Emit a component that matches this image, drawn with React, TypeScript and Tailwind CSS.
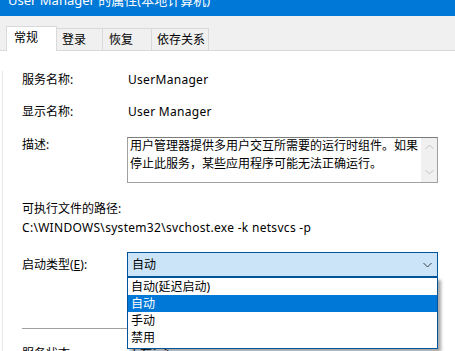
import React from "react";

const font = { fontFamily: '"Noto Sans", "Noto Sans CJK SC", sans-serif' };

export default function App() {
  return (
    <div
      className="relative w-[455px] h-[351px] overflow-hidden bg-white text-[12px] text-black"
      style={font}
    >
      {/* title bar */}
      <div className="h-[16px] bg-[#0078d7] overflow-hidden">
        <div className="pl-[8px] -mt-[9px] text-[13px] leading-[18px] text-white whitespace-nowrap">
          User Manager 的属性(本地计算机)
        </div>
      </div>

      {/* tab strip */}
      <div className="h-[35px] bg-[#f0f0f0] border-b border-[#d9d9d9] flex items-end pl-[6px]">
        <div className="w-[51px] h-[25px] -mb-[1px] bg-white border border-b-0 border-[#d9d9d9] pl-[7px] leading-[22px]">
          常规
        </div>
        <div className="w-[46px] h-[22px] border-t border-r border-[#d9d9d9] pl-[5px] leading-[22px]">
          登录
        </div>
        <div className="w-[49px] h-[22px] border-t border-r border-[#d9d9d9] pl-[6px] leading-[22px]">
          恢复
        </div>
        <div className="w-[57px] h-[22px] border-t border-r border-[#d9d9d9] pl-[5px] leading-[22px]">
          依存关系
        </div>
      </div>

      {/* content */}
      <div className="ml-[2px] border-l border-[#e6e6e6] pl-[19px] h-[300px]">
        <div className="mt-[20px] flex h-[18px] leading-[18px]">
          <div className="w-[106px]">服务名称:</div>
          <div className="tracking-[0.3px]">UserManager</div>
        </div>
        <div className="mt-[14px] flex h-[18px] leading-[18px]">
          <div className="w-[106px]">显示名称:</div>
          <div className="tracking-[0.3px]">User Manager</div>
        </div>
        <div className="mt-[16px] flex">
          <div className="w-[105px] leading-[16px]">描述:</div>
          <div className="w-[311px] h-[46px] border border-[#a0a0a0] border-t-[#7a7a7a] flex">
            <div className="flex-1 pl-[2px] leading-[18px] -mt-[1px]">
              用户管理器提供多用户交互所需要的运行时组件。如果停止此服务，某些应用程序可能无法正确运行。
            </div>
            <div className="w-[16px] bg-[#f0f0f0] flex flex-col items-center justify-between pt-[6px] pb-[7px]">
              <svg width="9" height="6" viewBox="0 0 9 6">
                <path d="M0.5 5 L4.5 1 L8.5 5" fill="none" stroke="#c2c2c2" strokeWidth="1" />
              </svg>
              <svg width="9" height="6" viewBox="0 0 9 6">
                <path d="M0.5 1 L4.5 5 L8.5 1" fill="none" stroke="#c2c2c2" strokeWidth="1" />
              </svg>
            </div>
          </div>
        </div>
        <div className="mt-[17px] h-[18px] leading-[18px]">可执行文件的路径:</div>
        <div className="mt-[1px] h-[18px] leading-[18px] whitespace-nowrap tracking-[0.3px]">
          C:\WINDOWS\system32\svchost.exe -k netsvcs -p
        </div>
        <div className="mt-[15px] flex items-center h-[25px]">
          <div className="w-[105px]">启动类型(<span className="underline">E</span>):</div>
          <div className="w-[311px] h-[25px] bg-[#cce4f7] border border-[#005499] flex items-center justify-between pl-[4px] pr-[5px]">
            <span>自动</span>
            <svg width="9" height="6" viewBox="0 0 9 6">
              <path d="M0.5 1 L4.5 5 L8.5 1" fill="none" stroke="#3c3c3c" strokeWidth="1" />
            </svg>
          </div>
        </div>
        <div className="mt-[51px] h-[1px] w-[416px] bg-[#a0a0a0]" />
        <div className="mt-[16px] flex h-[18px] leading-[18px]">
          <div className="w-[106px]">服务状态:</div>
          <div>正在运行</div>
        </div>
      </div>

      {/* dropdown list */}
      <div className="absolute left-[127px] top-[277px] w-[311px] h-[72px] bg-white border border-[#005499] shadow-[3px_3px_3px_rgba(0,0,0,0.35)]">
        <div className="h-[17px] leading-[17px] pl-[3px]">自动(延迟启动)</div>
        <div className="h-[17px] leading-[17px] pl-[3px] bg-[#0078d7] text-white">自动</div>
        <div className="h-[17px] leading-[17px] pl-[3px]">手动</div>
        <div className="h-[17px] leading-[17px] pl-[3px]">禁用</div>
      </div>
    </div>
  );
}
